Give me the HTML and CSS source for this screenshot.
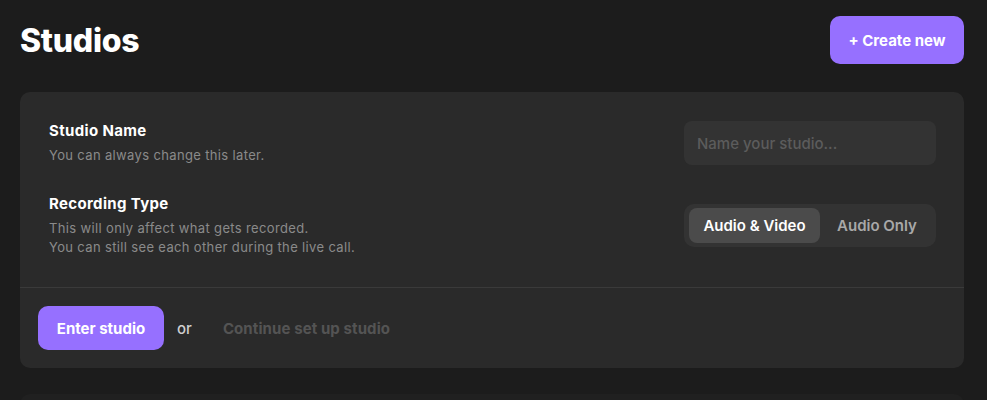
FILE: index.html
```html
<!DOCTYPE html>
<html>
<head>
<meta charset="utf-8">
<link rel="stylesheet" href="styles.css">
</head>
<body>
<div class="page">
  <header class="header">
    <h1 class="title">Studios</h1>
    <button class="btn btn-create">+ Create new</button>
  </header>
  <section class="card">
    <div class="card-body">
      <div class="row">
        <div class="label">
          <div class="label-title">Studio Name</div>
          <div class="label-sub">You can always change this later.</div>
        </div>
        <input class="input" type="text" placeholder="Name your studio...">
      </div>
      <div class="row">
        <div class="label">
          <div class="label-title">Recording Type</div>
          <div class="label-sub">This will only affect what gets recorded.<br>You can still see each other during the live call.</div>
        </div>
        <div class="segmented">
          <div class="seg seg-active">Audio &amp; Video</div>
          <div class="seg">Audio Only</div>
        </div>
      </div>
    </div>
    <div class="card-footer">
      <button class="btn btn-enter">Enter studio</button>
      <span class="or">or</span>
      <span class="continue">Continue set up studio</span>
    </div>
  </section>
  <section class="card card-next"></section>
</div>
</body>
</html>
```
FILE: styles.css
```css
* { box-sizing: border-box; }
html, body {
  margin: 0;
  background: #1c1c1c;
  font-family: Inter, "Noto Sans", sans-serif;
  color: #fff;
  overflow: hidden;
}
.page {
  padding: 16px 23px 0 20px;
}
.header {
  display: flex;
  justify-content: space-between;
  align-items: center;
  height: 48px;
}
.title {
  margin: 0;
  font-size: 32px;
  font-weight: 800;
  letter-spacing: -0.3px;
  color: #fff;
}
.btn {
  border: none;
  background: #9670ff;
  color: #fff;
  font-family: inherit;
  font-size: 15px;
  font-weight: 700;
  border-radius: 10px;
  cursor: pointer;
}
.btn-create {
  height: 48px;
  width: 134px;
  padding: 0;
}
.card {
  margin-top: 28px;
  background: #2a2a2a;
  border-radius: 10px;
}
.card-body {
  padding: 29px 28px 30px 29px;
  display: flex;
  flex-direction: column;
  gap: 29px;
  border-bottom: 1px solid #3a3a3a;
}
.row {
  display: flex;
  justify-content: space-between;
  align-items: center;
}
.label-title {
  font-size: 15px;
  line-height: 20px;
  font-weight: 700;
  letter-spacing: 0.35px;
  color: #fff;
}
.label-sub {
  margin-top: 5px;
  font-size: 13px;
  line-height: 19px;
  letter-spacing: 0.35px;
  color: #8a8a8a;
}
.input {
  width: 252px;
  height: 44px;
  border: none;
  outline: none;
  border-radius: 8px;
  background: #333333;
  padding: 0 13px;
  font-family: inherit;
  font-size: 15px;
  color: #fff;
}
.input::placeholder {
  color: #5c5c5c;
  font-weight: 500;
}
.segmented {
  width: 252px;
  height: 43px;
  background: #333333;
  border-radius: 10px;
  padding: 4px 5px;
  display: flex;
  align-items: stretch;
}
.seg {
  display: flex;
  align-items: center;
  justify-content: center;
  font-size: 15px;
  font-weight: 600;
  color: #a8a8a8;
  border-radius: 8px;
}
.seg-active {
  width: 131px;
  background: #4b4b4b;
  color: #fff;
}
.seg:not(.seg-active) {
  flex: 1;
  padding-left: 3px;
}
.card-footer {
  padding: 18px;
  display: flex;
  align-items: center;
}
.btn-enter {
  height: 44px;
  width: 126px;
  padding: 0;
}
.or {
  margin-left: 13px;
  font-size: 15px;
  color: #cfcfcf;
  font-weight: 500;
}
.continue {
  margin-left: 31px;
  font-size: 15px;
  font-weight: 700;
  letter-spacing: 0.1px;
  color: #545454;
}
.card-next {
  margin-top: 26px;
  height: 100px;
  background: #202020;
}
```
